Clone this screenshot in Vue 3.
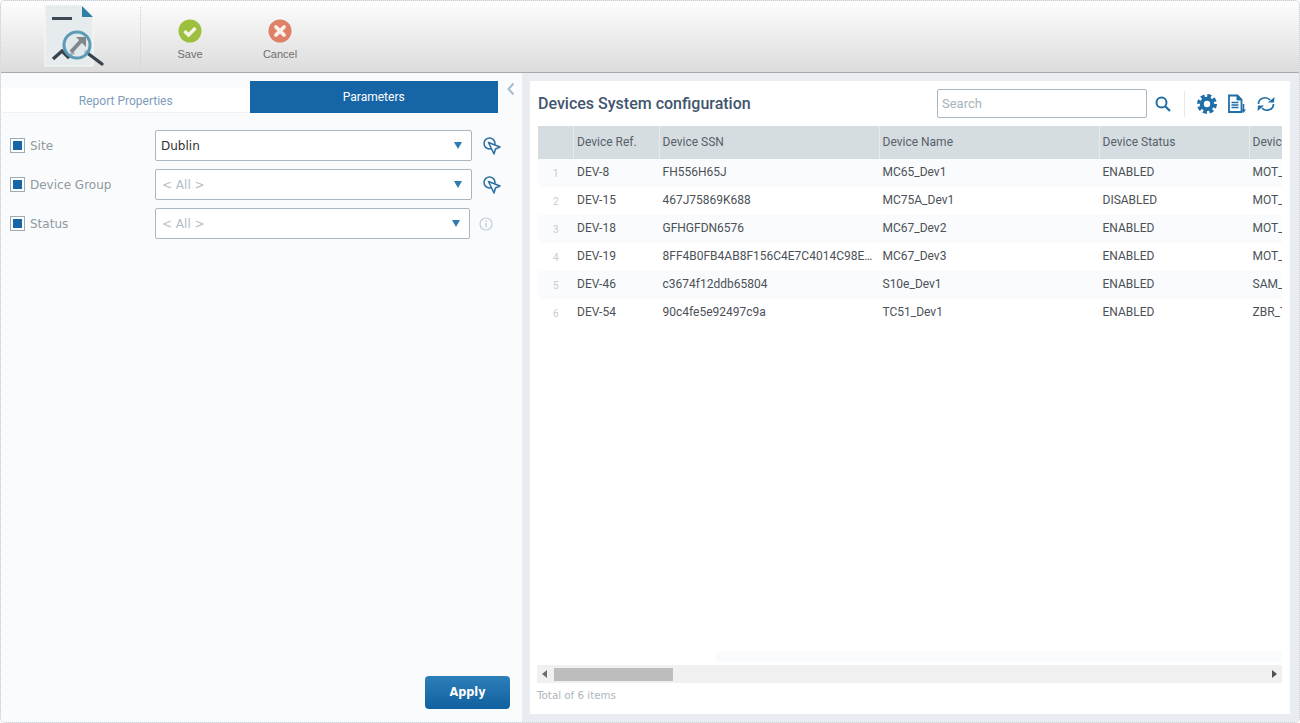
<script setup>
const params = [
  { label: 'Site', value: 'Dublin', action: 'pin' },
  { label: 'Device Group', value: '< All >', empty: true, action: 'pin' },
  { label: 'Status', value: '< All >', empty: true, action: 'info' }
];

const devices = [
  { ref: 'DEV-8', ssn: 'FH556H65J', name: 'MC65_Dev1', status: 'ENABLED', model: 'MOT_MC65' },
  { ref: 'DEV-15', ssn: '467J75869K688', name: 'MC75A_Dev1', status: 'DISABLED', model: 'MOT_MC75A' },
  { ref: 'DEV-18', ssn: 'GFHGFDN6576', name: 'MC67_Dev2', status: 'ENABLED', model: 'MOT_MC67' },
  { ref: 'DEV-19', ssn: '8FF4B0FB4AB8F156C4E7C4014C98E5A27D', name: 'MC67_Dev3', status: 'ENABLED', model: 'MOT_MC67' },
  { ref: 'DEV-46', ssn: 'c3674f12ddb65804', name: 'S10e_Dev1', status: 'ENABLED', model: 'SAM_S10e' },
  { ref: 'DEV-54', ssn: '90c4fe5e92497c9a', name: 'TC51_Dev1', status: 'ENABLED', model: 'ZBR_TC51' }
];
</script>

<template>
  <div class="pantalla">
    <header class="toolbar">
      <div class="logo">
        <svg width="66" height="64" viewBox="0 0 66 64">
          <path d="M1 0H37L49 12V61H1Z" fill="#e6ebee" stroke="#f8f9fa" />
          <path d="M38 1L49 12H38Z" fill="#2f7fa6" />
          <rect x="8" y="12" width="20" height="3" fill="#3d4a55" />
          <path d="M9 54L18 46L24 52L30 47" fill="none" stroke="#39434c" stroke-width="3.4" />
          <path d="M42 47L58 59" stroke="#39434c" stroke-width="3.4" stroke-linecap="round" />
          <circle cx="33" cy="40" r="13" fill="#dfe8ec" fill-opacity="0.7" stroke="#5b9ab5" stroke-width="3" />
          <path d="M27 47L37 36" stroke="#84878a" stroke-width="4" />
          <path d="M32 32H42V42Z" fill="#84878a" />
        </svg>
      </div>
      <div class="sep-toolbar"></div>
      <button class="tool tool-save">
        <svg width="24" height="24" viewBox="0 0 24 24">
          <circle cx="12" cy="12" r="11.5" fill="#9dbf3e" />
          <path d="M6.5 12L10.5 16L17.5 9" fill="none" stroke="#f4f7e6" stroke-width="3.4" />
        </svg>
        <span>Save</span>
      </button>
      <button class="tool tool-cancel">
        <svg width="24" height="24" viewBox="0 0 24 24">
          <circle cx="12" cy="12" r="11.5" fill="#df8169" />
          <path d="M8 8L16 16M16 8L8 16" fill="none" stroke="#fbefe9" stroke-width="3.8" stroke-linecap="round" />
        </svg>
        <span>Cancel</span>
      </button>
    </header>

    <main class="cuerpo">
      <aside class="panel-izq">
        <div class="tabs-fila">
          <div class="tabs">
            <div class="tab">Report Properties</div>
            <div class="tab tab-activa">Parameters</div>
          </div>
          <svg class="colapsar" width="10" height="14" viewBox="0 0 10 14">
            <path d="M7.5 1.5L2.5 7L7.5 12.5" fill="none" stroke="#a9bccb" stroke-width="2" />
          </svg>
        </div>

        <div class="parametros">
          <div v-for="p in params" :key="p.label" class="param">
            <span class="check"><i></i></span>
            <label>{{ p.label }}</label>
            <div class="combo" :class="{ 'combo-angosto': p.action === 'info', vacio: p.empty }">
              <span>{{ p.value }}</span>
              <b class="flecha"></b>
            </div>
            <svg v-if="p.action === 'pin'" class="accion" width="20" height="20" viewBox="0 0 20 20">
              <circle cx="7.5" cy="7.5" r="5.5" fill="none" stroke="#2a6f9f" stroke-width="1.5" />
              <path d="M6.5 6.5L18 11L13.5 13L12 18Z" fill="#f9fbfd" stroke="#2a6f9f" stroke-width="1.5" stroke-linejoin="round" />
            </svg>
            <svg v-else class="accion info" width="14" height="14" viewBox="0 0 14 14">
              <circle cx="7" cy="7" r="6" fill="none" stroke="#c3ced8" stroke-width="1.2" />
              <path d="M7 6V10.5M7 3.5V5" stroke="#c3ced8" stroke-width="1.4" />
            </svg>
          </div>
        </div>

        <button class="btn-aplicar">Apply</button>
      </aside>

      <section class="tarjeta">
        <div class="cabecera">
          <h2>Devices System configuration</h2>
          <input class="buscar" type="text" placeholder="Search" />
          <svg class="ico-buscar" width="18" height="18" viewBox="0 0 18 18">
            <circle cx="7.5" cy="7.5" r="5" fill="none" stroke="#1f6ea8" stroke-width="2" />
            <path d="M11.5 11.5L16 16" stroke="#1f6ea8" stroke-width="2.2" />
          </svg>
          <div class="sep-cabecera"></div>
          <svg width="20" height="20" viewBox="0 0 20 20" class="ico-gear">
            <circle cx="10" cy="10" r="8.3" fill="none" stroke="#1f6ea8" stroke-width="3.4" stroke-dasharray="3.9 2.62" />
            <circle cx="10" cy="10" r="5.2" fill="none" stroke="#1f6ea8" stroke-width="4" />
          </svg>
          <svg width="20" height="20" viewBox="0 0 20 20" class="ico-doc">
            <path d="M2 1.5H10.5L14.5 5.5V18H2Z" fill="none" stroke="#1f6ea8" stroke-width="1.8" />
            <path d="M10 1.5V6H14.5" fill="#1f6ea8" stroke="#1f6ea8" stroke-width="1" />
            <path d="M4.5 8.5H11.5M4.5 11H11.5M4.5 13.5H11.5" stroke="#1f6ea8" stroke-width="1.5" />
            <path d="M16.5 10V17" stroke="#1f6ea8" stroke-width="1.6" />
            <path d="M14 15.5H19L16.5 19Z" fill="#1f6ea8" />
          </svg>
          <svg width="20" height="16" viewBox="0 0 20 16" class="ico-refresh">
            <path d="M2.5 8A6.5 6 0 0 1 14 4" fill="none" stroke="#1f6ea8" stroke-width="1.7" />
            <path d="M12 6.5H18L18.5 1Z" fill="#1f6ea8" />
            <path d="M17.5 8A6.5 6 0 0 1 6 12" fill="none" stroke="#1f6ea8" stroke-width="1.7" />
            <path d="M8 9.5H2L1.5 15Z" fill="#1f6ea8" />
          </svg>
        </div>

        <table class="tabla">
          <colgroup>
            <col class="c-num" /><col class="c-ref" /><col class="c-ssn" /><col class="c-name" /><col class="c-status" /><col />
          </colgroup>
          <thead>
            <tr>
              <th></th>
              <th>Device Ref.</th>
              <th>Device SSN</th>
              <th>Device Name</th>
              <th>Device Status</th>
              <th>Device Model</th>
            </tr>
          </thead>
          <tbody>
            <tr v-for="(d, i) in devices" :key="d.ref">
              <td class="num">{{ i + 1 }}</td>
              <td>{{ d.ref }}</td>
              <td class="ssn">{{ d.ssn }}</td>
              <td>{{ d.name }}</td>
              <td>{{ d.status }}</td>
              <td class="cortado">{{ d.model }}</td>
            </tr>
          </tbody>
        </table>

        <div class="resto"><div class="franja"></div></div>

        <div class="scroll">
          <b class="sc-izq"></b>
          <div class="sc-pista"><div class="sc-barra"></div></div>
          <b class="sc-der"></b>
        </div>
        <div class="total">Total of 6 items</div>
      </section>
    </main>
  </div>
</template>

<style>
body { margin: 0; background: #fff; }
</style>

<style scoped>
.pantalla {
  height: 100vh;
  box-sizing: border-box;
  display: flex;
  flex-direction: column;
  border: 1px dotted #c9cdd1;
  border-radius: 5px;
  overflow: hidden;
  background: #e9edf2;
  font-family: Roboto, sans-serif;
}

.toolbar {
  height: 72px;
  flex: none;
  box-sizing: border-box;
  display: flex;
  align-items: stretch;
  background: linear-gradient(#fdfdfd, #dcdcdc);
  border-bottom: 1px solid #a9a9a9;
}
.logo { width: 139px; padding: 4px 0 0 43px; box-sizing: border-box; }
.sep-toolbar { margin: 6px 0 4px; border-left: 1px dotted #d0d0d0; }
.tool {
  width: 44px;
  background: none;
  border: none;
  padding: 18px 0 0;
  display: flex;
  flex-direction: column;
  align-items: center;
  gap: 5px;
  font-family: "Liberation Sans", sans-serif;
  font-size: 11px;
  color: #6f6f6f;
}
.tool-save { margin-left: 27px; }
.tool-cancel { margin-left: 46px; }

.cuerpo { flex: 1; display: flex; min-height: 0; }

.panel-izq {
  width: 521px;
  flex: none;
  box-sizing: border-box;
  background: #f9fbfd;
  padding-top: 8px;
  display: flex;
  flex-direction: column;
}
.tabs-fila { display: flex; align-items: flex-start; }
.tabs {
  width: 497px;
  display: flex;
  align-items: flex-end;
  font-size: 12px;
}
.tab {
  width: 249px;
  height: 25px;
  line-height: 26px;
  padding-left: 1px;
  text-align: center;
  background: #fff;
  color: #7d9dbb;
  border-bottom: 1px solid #eef2f5;
  box-sizing: border-box;
}
.tab-activa {
  height: 32px;
  line-height: 32px;
  padding-left: 0;
  background: #1565a7;
  color: #fff;
  border-bottom: none;
}
.colapsar { margin: 1px 0 0 8px; }

.parametros {
  padding: 17px 0 0 9px;
  display: flex;
  flex-direction: column;
  gap: 8px;
}
.param { display: flex; align-items: center; height: 31px; }
.check {
  width: 15px;
  height: 15px;
  box-sizing: border-box;
  border: 1px solid #9aacb9;
  background: #fff;
  padding: 2px;
  flex: none;
}
.check i { display: block; width: 9px; height: 9px; background: #1565a7; }
.param label {
  width: 125px;
  margin-left: 5px;
  font-family: "DejaVu Sans", sans-serif;
  font-size: 12px;
  color: #8f999f;
}
.combo {
  width: 317px;
  height: 31px;
  box-sizing: border-box;
  border: 1px solid #a9b7c2;
  border-radius: 2px;
  background: #fff;
  display: flex;
  align-items: center;
  justify-content: space-between;
  padding: 0 9px 0 5px;
  font-family: "DejaVu Sans", sans-serif;
  font-size: 12px;
  color: #333;
}
.combo-angosto { width: 315px; }
.vacio { color: #b3bdc6; padding-left: 6px; }
.flecha {
  width: 0;
  height: 0;
  border-left: 4.5px solid transparent;
  border-right: 4.5px solid transparent;
  border-top: 7px solid #2e7bb0;
}
.accion { margin-left: 10px; }
.accion.info { margin-left: 9px; }

.btn-aplicar {
  margin: auto 12px 13px auto;
  width: 85px;
  height: 33px;
  border: none;
  border-radius: 4px;
  padding: 0 0 2px;
  background: linear-gradient(#2d7fb9, #10609f);
  color: #fff;
  font-family: "DejaVu Sans", sans-serif;
  font-stretch: condensed;
  font-size: 12.5px;
  font-weight: 700;
}

.tarjeta {
  width: 760px;
  flex: none;
  margin: 8px 0 8px 8px;
  box-sizing: border-box;
  background: #fff;
  padding: 8px 8px 0;
  display: flex;
  flex-direction: column;
}
.cabecera { height: 29px; display: flex; align-items: center; margin-bottom: 8px; flex: none; }
.cabecera h2 {
  margin: 0 auto 0 0;
  font-size: 16px;
  font-weight: 500;
  color: #3f566e;
}
.buscar {
  width: 210px;
  height: 29px;
  box-sizing: border-box;
  border: 1px solid #a9b7c2;
  border-radius: 2px;
  padding: 0 4px;
  margin-right: -1px;
  font-family: Roboto, sans-serif;
  font-size: 13px;
  outline: none;
}
.buscar::placeholder { color: #a8b2bb; }
.ico-buscar { margin-left: 8px; }
.sep-cabecera { height: 26px; margin: 0 12px 0 12px; border-left: 1px solid #e6eaee; }
.ico-doc { margin-left: 10px; }
.ico-refresh { margin: 0 6px 0 9px; }

.tabla {
  width: 744px;
  table-layout: fixed;
  border-collapse: collapse;
  font-size: 12px;
  color: #4c5157;
  flex: none;
}
.c-num { width: 35px; }
.c-ref { width: 85.5px; }
.c-ssn { width: 220px; }
.c-name { width: 220px; }
.c-status { width: 150px; }
.tabla th {
  height: 33px;
  box-sizing: border-box;
  padding: 0 0 2px 4px;
  background: #d6dde1;
  font-weight: 400;
  text-align: left;
  white-space: nowrap;
  overflow: hidden;
  color: #56606a;
  box-shadow: inset 1px 0 0 #e6ebee;
}
.tabla th:first-child { box-shadow: none; }
.tabla td {
  height: 28px;
  box-sizing: border-box;
  padding: 0 0 2px 4px;
  white-space: nowrap;
  overflow: hidden;
}
.tabla tbody tr:nth-child(odd) td { background: #f9fbfd; }
.tabla td.num { padding: 0 0 0 15px; font-size: 10px; color: #c6ccd1; }
.tabla td.ssn { text-overflow: ellipsis; }

.resto { flex: 1; display: flex; flex-direction: column; justify-content: flex-end; padding-bottom: 3px; min-height: 0; }
.franja { height: 11px; margin-left: 178px; background: #f9fbfd; }

.scroll {
  height: 18px;
  margin-left: -1px;
  flex: none;
  display: flex;
  align-items: center;
  background: #f0f0f0;
}
.sc-izq, .sc-der { width: 0; height: 0; border-top: 4px solid transparent; border-bottom: 4px solid transparent; flex: none; }
.sc-izq { margin: 0 7px 0 5px; border-right: 5px solid #6d6d6d; }
.sc-der { margin: 0 5px 0 6px; border-left: 5px solid #505050; }
.sc-pista { flex: 1; }
.sc-barra { width: 119px; height: 13px; background: #bdbdbd; }

.total {
  flex: none;
  height: 31px;
  line-height: 24px;
  margin-left: -1px;
  font-family: "DejaVu Sans", sans-serif;
  font-size: 10.3px;
  color: #adb6be;
}
</style>
